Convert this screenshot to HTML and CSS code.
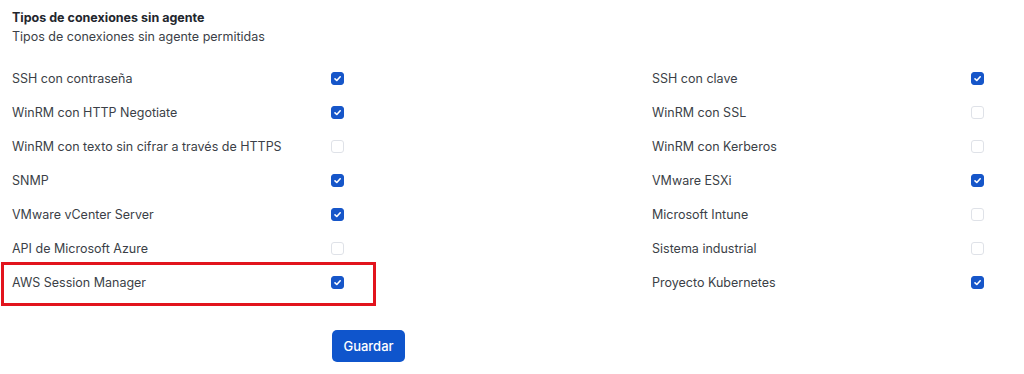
FILE: index.html
```html
<!DOCTYPE html>
<html lang="es">

    <head>
        <meta charset="UTF-8">
        <meta name="viewport" content="width=device-width, initial-scale=1.0">
        <title>Tipos de conexiones sin agente</title>
        <link rel="stylesheet" href="styles.css">
    </head>

    <body>
        <div class="section-header">
            <h2>Tipos de conexiones sin agente</h2>
            <p>Tipos de conexiones sin agente permitidas</p>
        </div>

        <div class="options">
            <div class="column">
                <label class="option"><span>SSH con contraseña</span><span class="check checked"><svg viewBox="0 0 13 13"><path d="M4 6.8l1.8 1.7L9.2 4.8"/></svg></span></label>
                <label class="option"><span>WinRM con HTTP Negotiate</span><span class="check checked"><svg viewBox="0 0 13 13"><path d="M4 6.8l1.8 1.7L9.2 4.8"/></svg></span></label>
                <label class="option"><span>WinRM con texto sin cifrar a través de HTTPS</span><span class="check"></span></label>
                <label class="option"><span>SNMP</span><span class="check checked"><svg viewBox="0 0 13 13"><path d="M4 6.8l1.8 1.7L9.2 4.8"/></svg></span></label>
                <label class="option"><span>VMware vCenter Server</span><span class="check checked"><svg viewBox="0 0 13 13"><path d="M4 6.8l1.8 1.7L9.2 4.8"/></svg></span></label>
                <label class="option"><span>API de Microsoft Azure</span><span class="check"></span></label>
                <label class="option highlight"><span>AWS Session Manager</span><span class="check checked"><svg viewBox="0 0 13 13"><path d="M4 6.8l1.8 1.7L9.2 4.8"/></svg></span></label>
            </div>

            <div class="column">
                <label class="option"><span>SSH con clave</span><span class="check checked"><svg viewBox="0 0 13 13"><path d="M4 6.8l1.8 1.7L9.2 4.8"/></svg></span></label>
                <label class="option"><span>WinRM con SSL</span><span class="check"></span></label>
                <label class="option"><span>WinRM con Kerberos</span><span class="check"></span></label>
                <label class="option"><span>VMware ESXi</span><span class="check checked"><svg viewBox="0 0 13 13"><path d="M4 6.8l1.8 1.7L9.2 4.8"/></svg></span></label>
                <label class="option"><span>Microsoft Intune</span><span class="check"></span></label>
                <label class="option"><span>Sistema industrial</span><span class="check"></span></label>
                <label class="option"><span>Proyecto Kubernetes</span><span class="check checked"><svg viewBox="0 0 13 13"><path d="M4 6.8l1.8 1.7L9.2 4.8"/></svg></span></label>
            </div>
        </div>

        <button class="save-button">Guardar</button>
    </body>

</html>
```

FILE: styles.css
```css
body {
    margin: 0;
    padding: 8px 12px;
    background: white;
    font-family: Inter, 'Noto Sans', Arial, sans-serif;
    font-size: 12.5px;
    color: #3b3f47;
}

.section-header h2 {
    margin: 0;
    font-size: 12.5px;
    line-height: 20px;
    font-weight: 700;
    color: #23262d;
}

.section-header p {
    margin: 0;
    line-height: 18px;
    color: #3b3f47;
}

.options {
    display: flex;
    gap: 308px;
    margin-top: 15px;
}

.column {
    width: 332px;
}

.option {
    display: flex;
    align-items: center;
    justify-content: space-between;
    height: 34px;
}

.check {
    width: 13px;
    height: 13px;
    box-sizing: border-box;
    border: 1px solid #dfe2e8;
    border-radius: 3px;
    background: white;
}

.check.checked {
    background: #1656c9;
    border-color: #1656c9;
}

.check svg {
    display: block;
    width: 13px;
    height: 13px;
    margin: -1px;
    fill: none;
    stroke: white;
    stroke-width: 1.6;
    stroke-linecap: round;
    stroke-linejoin: round;
}

/* red annotation frame */
.highlight {
    position: relative;
}

.highlight::after {
    content: '';
    position: absolute;
    top: -3px;
    bottom: -7px;
    left: -11px;
    right: -32px;
    border: 3px solid #e2141d;
}

.save-button {
    display: block;
    margin: 31px 0 0 320px;
    width: 73px;
    height: 32px;
    padding: 0;
    background: #0f55cc;
    color: white;
    border: none;
    border-radius: 5px;
    font-family: inherit;
    font-size: 13px;
    font-weight: 500;
}
```
